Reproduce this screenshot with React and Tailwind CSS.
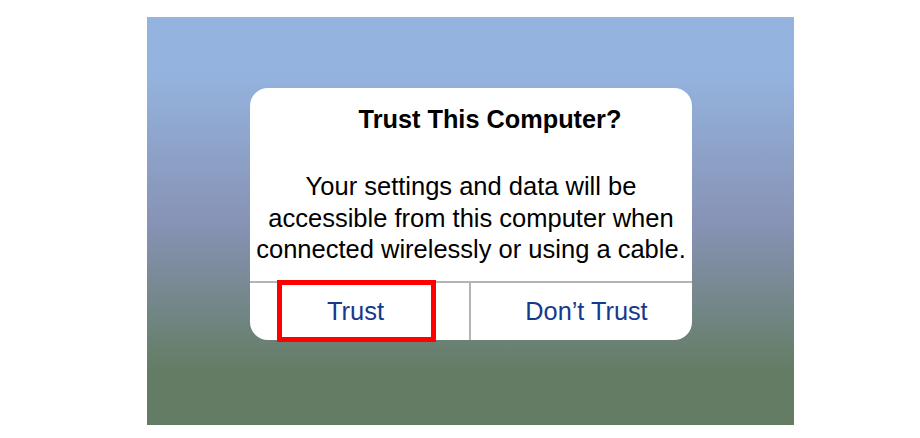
import React from 'react';

const TrustDialog = () => (
  <div className="w-[442px] h-[252px] bg-white rounded-[18px] flex flex-col overflow-hidden">
    <h2 className="pt-4 pl-[38px] text-center text-[25.3px] leading-[30px] font-bold text-black">
      Trust This Computer?
    </h2>
    <p className="mt-[37px] text-center text-[25.5px] leading-[31.5px] text-black">
      Your settings and data will be
      <br />
      accessible from this computer when
      <br />
      connected wirelessly or using a cable.
    </p>
    <div className="mt-auto h-[59px] flex border-t-2 border-[#b4b4b4]">
      <button className="flex-1 pr-2 text-[25.5px] text-[#15398c]">Trust</button>
      <div className="w-[2px] bg-[#b4b4b4]" />
      <button className="flex-1 pl-[10px] text-[25.3px] text-[#15398c]">Don’t Trust</button>
    </div>
  </div>
);

export default function App() {
  return (
    <div className="w-[920px] h-[438px] bg-white font-['Liberation_Sans',Arial,sans-serif] pt-[17px] pl-[147px]">
      <div className="relative w-[647px] h-[408px] pt-[71px] pl-[103px] bg-linear-to-b from-[#94b4df] from-[13%] via-[#8792b5] via-[51%] to-[#647c63] to-[87%]">
        <TrustDialog />
        {/* red highlight around the Trust button */}
        <div className="absolute left-[130px] top-[263px] w-[159px] h-[62px] border-[5px] border-[#ff0000]" />
      </div>
    </div>
  );
}
